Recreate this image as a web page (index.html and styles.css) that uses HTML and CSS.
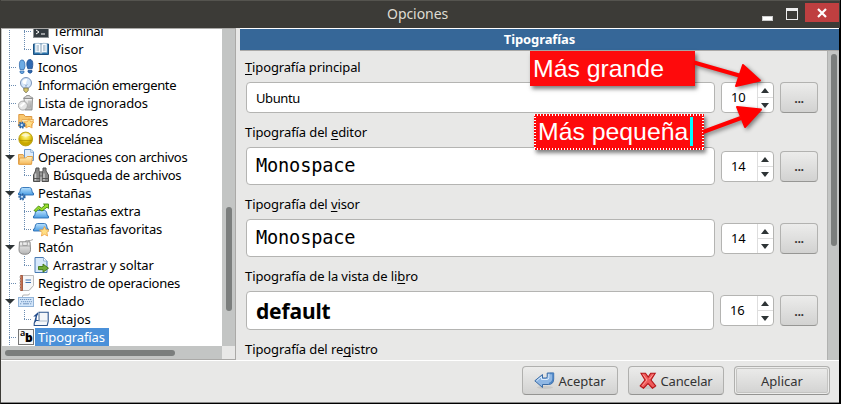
FILE: index.html
```
<!DOCTYPE html>
<html lang="es">
<head>
<meta charset="utf-8">
<title>Opciones</title>
<link rel="stylesheet" href="styles.css">
</head>
<body>
<svg class="defs" width="0" height="0">
  <defs>
    <linearGradient id="blue" x2="0" y2="1"><stop stop-color="#b9e2ff"/><stop offset="1" stop-color="#4a9ce2"/></linearGradient>
    <linearGradient id="gray" x2="0" y2="1"><stop stop-color="#f6f6f6"/><stop offset="1" stop-color="#b4b4b4"/></linearGradient>
    <radialGradient id="gold" cx=".5" cy=".3"><stop stop-color="#fff9a0"/><stop offset=".6" stop-color="#ecd42c"/><stop offset="1" stop-color="#c9a800"/></radialGradient>
    <linearGradient id="folder" x2="0" y2="1"><stop stop-color="#fff0bd"/><stop offset="1" stop-color="#f5b85a"/></linearGradient>
    <path id="tab" d="M4.500 2.500h7q1.500 0 2 1.500l1 4h1v2H.5v-2h1l1-4q.5-1.500 2-1.500z" fill="url(#blue)" stroke="#2a6eb4" stroke-width=".9"/>
    <path id="star" d="M0-5l1.500 3.200 3.500.400-2.600 2.400.700 3.500L0 2.800l-3.100 1.700.700-3.500L-5-1.400l3.500-.400z" fill="#ffdf85" stroke="#eda040" stroke-width=".8"/>
    <g id="gear" fill="#4b86c6" stroke="#29609e" stroke-width=".8"><circle r="2.600" stroke-width="2" stroke-dasharray="1.300 1.100"/><circle r="1" fill="#d8ebfc" stroke="none"/></g>
  </defs>
</svg>
<div class="window">
  <header class="titlebar">
    <h1>Opciones</h1>
    <div class="controls">
      <i class="minimize"></i><i class="maximize"></i>
      <span class="close"><svg width="10" height="10" viewBox="0 0 10 10"><path d="M1 1l8 8M9 1L1 9" stroke="#fff" stroke-width="2.200"/></svg></span>
    </div>
  </header>

  <main>
    <aside>
      <div class="tree">
        <div class="row"><i class="g root"></i><i class="g sub mid"></i>
          <svg class="icon" viewBox="0 0 16 16"><rect x=".5" y=".5" width="15" height="14" fill="#333b40" stroke="#8d9295"/><path d="M3 7l3 2-3 2M8 11h4" stroke="#fff" fill="none"/></svg>
          <span class="label t4">Terminal</span></div>
        <div class="row"><i class="g root"></i><i class="g sub"></i>
          <svg class="icon" viewBox="0 0 16 16"><path d="M.5 3v10.500h15V3z" fill="#2d76ad" stroke="#1d5081"/><path d="M2 2.500q4-1 6 1 2-2 6-1v9q-4-1-6 1-2-2-6-1z" fill="#f7fbff" stroke="#92b6cf" stroke-width=".6"/><path d="M8 3.500v9M3.500 5H6M3.500 7H6M3.500 9H6M10 5h2.500M10 7h2.500M10 9h2.500" stroke="#87a1b7"/></svg>
          <span class="label">Visor</span></div>
        <div class="row"><i class="g root tee"></i>
          <svg class="icon" viewBox="0 0 16 16"><path d="M3.200 1Q6 .2 6.800 4T6 10.500H2Q.3 2.500 3.200 1z" fill="#6dabe4" stroke="#376fae" stroke-width=".8"/><path d="M2 12h4v1.500q-2 2.500-4 0z" fill="#6dabe4" stroke="#376fae" stroke-width=".8"/><path d="M13 .6Q9.800-.2 9 3t.9 6.800h4.200Q16 2.500 13 .6z" fill="#2f69b1" stroke="#1d4e90" stroke-width=".8"/><path d="M10 11.500H14V13q-1.800 2.500-4 0z" fill="#2f69b1" stroke="#1d4e90" stroke-width=".8"/></svg>
          <span class="label t2">Iconos</span></div>
        <div class="row"><i class="g root tee"></i>
          <svg class="icon" viewBox="0 0 16 16"><circle cx="8" cy="6" r="5.500" fill="#d4e6fb" stroke="#7b94b9"/><path d="M4.200 5q1.200-3.500 5-3l-2 7z" fill="#fff"/><path d="M6.500 7.500l1.500 1 1.500-1M8 8v3" fill="none" stroke="#8da6ca" stroke-width=".8"/><path d="M5.800 11h4.400v2.500L8.500 15.500h-1L5.800 13.500z" fill="#d6c66a" stroke="#746d4e" stroke-width=".8"/></svg>
          <span class="label t4">Información emergente</span></div>
        <div class="row"><i class="g root tee"></i>
          <svg class="icon" viewBox="0 0 16 16"><path d="M6 3.500h8.500l-.5 11.500H7z" fill="url(#gray)" stroke="#8a8a8a" stroke-width=".9"/><path d="M5.500 3.500q0-1.500 2-1.500l1-1.500h3l1 1.500q2.500 0 2.500 1.500z" fill="#d2d2d2" stroke="#858585" stroke-width=".8"/><path d="M11 5.500V13M13 5.500l-.3 7" stroke="#999" stroke-width=".8"/><circle cx="4.900" cy="10.600" r="4.500" fill="#e6e6e6" stroke="#999" stroke-width=".8"/><path d="M2.500 11.500l4-3.500" stroke="#fff" stroke-width="2"/></svg>
          <span class="label t1">Lista de ignorados</span></div>
        <div class="row"><i class="g root tee"></i>
          <svg class="icon" viewBox="0 0 16 16"><path d="M.8 13.500v-12h5l1.500 2h6.500v10z" fill="#f9c76e" stroke="#dc9740"/><path d="M2 13.500l2-7h11.500l-2 7z" fill="url(#folder)" stroke="#e3a246" stroke-width=".8"/><use href="#gear" x="3.800" y="12"/><use href="#star" x="11" y="10.500"/></svg>
          <span class="label t2">Marcadores</span></div>
        <div class="row"><i class="g root tee"></i>
          <svg class="icon" viewBox="0 0 16 16"><circle cx="7.700" cy="8" r="6.900" fill="url(#gold)" stroke="#b9a017" stroke-width=".9"/><path d="M3 4.500q4.700-5 9.400 0-4.700 1.800-9.400 0z" fill="#fff" opacity=".6"/><path d="M1.500 9.500h12.500" stroke="#a98e00" opacity=".7"/></svg>
          <span class="label t4">Miscelánea</span></div>
        <div class="row"><i class="g root open"></i>
          <svg class="icon" viewBox="0 0 16 16"><path d="M.5 15V5.500h4.500l1 1.500h7v8z" fill="#f5c67b" stroke="#e0a04c"/><path d="M6.500.5h6.500l2.500 2.500v8.500h-9z" fill="#deecfb" stroke="#6999cf"/><path d="M12.800.8v2.500h2.400" fill="#fff" stroke="#6999cf" stroke-width=".7"/><path d="M.8 15.300L1.700 9h6l1.500-1.500h5.300l-1 7.800z" fill="url(#folder)" stroke="#e3a246"/></svg>
          <span class="label t3">Operaciones con archivos</span></div>
        <div class="row"><i class="g root"></i><i class="g sub"></i>
          <svg class="icon" viewBox="0 0 16 16"><path d="M3 1h3v2.500l1 1v10H.5V8L2.500 4zM10 1h3v3l2.500 4v6.500H9v-10l1-1z" fill="#888" stroke="#4e4e4e"/><path d="M6.500 5h3v4h-3z" fill="#999" stroke="#555" stroke-width=".7"/><path d="M2.500 6.500v7M11 6.500v7" stroke="#ccc" stroke-width="1.500"/><path d="M.5 11.500H7M9 11.500h6.500" stroke="#555"/></svg>
          <span class="label t3">Búsqueda de archivos</span></div>
        <div class="row"><i class="g root open"></i>
          <svg class="icon" viewBox="0 0 16 16"><use href="#tab"/><use href="#gear" x="4" y="11.800"/></svg>
          <span class="label t2">Pestañas</span></div>
        <div class="row"><i class="g root"></i><i class="g sub mid"></i>
          <svg class="icon" viewBox="0 0 16 16"><use href="#tab" y="5"/><path d="M1 7.500L5.500 3l3 2L12 2.200 10.500 1H15.500V5.500L14 4.200 9 8 5.700 6 3 8.500z" fill="#9be02e" stroke="#43870d" stroke-width=".9"/></svg>
          <span class="label t1">Pestañas extra</span></div>
        <div class="row"><i class="g root"></i><i class="g sub"></i>
          <svg class="icon" viewBox="0 0 16 16"><use href="#tab"/><use href="#star" x="11.500" y="10.500"/></svg>
          <span class="label t1">Pestañas favoritas</span></div>
        <div class="row"><i class="g root open"></i>
          <svg class="icon" viewBox="0 0 16 16"><path d="M7.500 4q-1-3 2-2.500t5.500-1" fill="none" stroke="#aaa"/><path d="M1.500 2.800h10.500l.5 8q0 4.500-5.700 4.500T1 10.800z" fill="url(#gray)" stroke="#888"/><path d="M4.700 3v3.500h4.600V3M1.300 7h11" fill="none" stroke="#989898" stroke-width=".8"/></svg>
          <span class="label t1">Ratón</span></div>
        <div class="row"><i class="g root"></i><i class="g sub"></i>
          <svg class="icon" viewBox="0 0 16 16"><path d="M2 .5h8.500L14 4v11.500H2z" fill="#d8e9fb" stroke="#4a7bb3"/><path d="M10.500.5V4H14" fill="#fff" stroke="#82a7d2" stroke-width=".8"/><path d="M5.500 9.500H10V7l5.500 4.200L10 15.200v-2.500H5.500z" fill="#71ad39" stroke="#3e7415" stroke-width=".9"/></svg>
          <span class="label t1">Arrastrar y soltar</span></div>
        <div class="row"><i class="g root tee"></i>
          <svg class="icon" viewBox="0 0 16 16"><path d="M3.500.5h12v10l-4.500 5H3.500z" fill="#f6f7f8" stroke="#bbb"/><path d="M2.500.5h2v15h-2z" fill="#c5704f" stroke="#99492f" stroke-width=".8"/><path d="M1 2h2M1 5h2M1 8h2M1 11h2M1 14h2" stroke="#bbb"/><path d="M7.500 5h5.500M7.500 7.500h5.500" stroke="#3f73b2" stroke-width="1.200"/><path d="M11 15.500l4.500-5" stroke="#bbb" stroke-width=".7"/></svg>
          <span class="label t2">Registro de operaciones</span></div>
        <div class="row"><i class="g root open"></i>
          <svg class="icon" viewBox="0 0 16 16"><path d="M4.500 4.500V3q0-1 1.500-1H10q1.500 0 1.500-1.500" fill="none" stroke="#b0b0b0"/><rect x=".5" y="4.500" width="15" height="9" fill="#d3e6fa" stroke="#93b4d8"/><path d="M2 6.500h12M3 8.700h11M2 10.800h2M12 10.800h2" stroke="#7396c0" stroke-dasharray="1.300 .7"/><path d="M5 10.800h6" stroke="#7396c0"/></svg>
          <span class="label">Teclado</span></div>
        <div class="row"><i class="g root"></i><i class="g sub"></i>
          <svg class="icon" viewBox="0 0 16 16"><path d="M6 1.200h9.200v9.300l-1 4H1.200V12l1-2.500h4z" fill="#f4f6f9" stroke="#2c548d" stroke-width="1.100"/><path d="M5.500 10h9M6.200 2v7.500" stroke="#aebdcd"/><path d="M.2 5.500L5 1.200v2.200Q3.700 4.500 3.500 9.500L1.700 12q-.5-4 1-6.500z" fill="#224d8d"/></svg>
          <span class="label">Atajos</span></div>
        <div class="row"><i class="g root tee"></i>
          <span class="icon ab"><b class="a">a</b><b class="b">b</b></span>
          <span class="label selected t1">Tipografías</span></div>
      </div>
      <div class="vbar"><i></i></div>
      <div class="hbar"><i></i></div>
      <div class="corner"></div>
    </aside>

    <section>
      <h2>Tipografías</h2>
      <div class="pane">
        <div class="form">
          <label class="l1"><u>T</u>ipografía principal</label>
          <div class="line h31"><div class="field ubuntu">Ubuntu</div>
            <div class="spin"><span>10</span><i></i></div><button class="dots">...</button></div>
          <label>Tipografía del <u>e</u>ditor</label>
          <div class="line h38"><div class="field mono">Monospace</div>
            <div class="spin"><span>14</span><i></i></div><button class="dots">...</button></div>
          <label>Tipografía del <u>v</u>isor</label>
          <div class="line h38"><div class="field mono">Monospace</div>
            <div class="spin"><span>14</span><i></i></div><button class="dots">...</button></div>
          <label>Tipografía de la vista de li<u>b</u>ro</label>
          <div class="line h39"><div class="field bold">default</div>
            <div class="spin wide"><span>16</span><i></i></div><button class="dots">...</button></div>
          <label>Tipografía del re<u>g</u>istro</label>
        </div>
        <div class="scroll"><i></i></div>
      </div>
    </section>
  </main>

  <footer>
    <button class="action"><svg width="21" height="18" viewBox="0 0 21 18"><ellipse cx="11" cy="15.500" rx="8" ry="1.500" fill="#c8c8c6"/><path d="M.8 8.800L8.500 2.500v3.500h3.500q1.200 0 1.200-1.500V1h6.500v6q0 5.500-5.500 5.500H8.500v3z" fill="#8fb7e4" stroke="#3a6ba5"/><path d="M2.500 8.800L7.500 4.700v2.800H13q1.800 0 1.800-2V2" fill="none" stroke="#dcebfb"/><path d="M16 1.500h3v5q0 4-4 5.200" fill="none" stroke="#4b83c2" stroke-width="1.500"/></svg><span>Aceptar</span></button>
    <button class="action"><svg width="18" height="18" viewBox="0 0 18 18"><ellipse cx="9" cy="15.500" rx="8" ry="1.500" fill="#c8c8c6"/><path d="M2 1.200h4.500L9.200 5l2.500-3.800h4.500L12 8l4.700 6-3.200 2.200L9 11.500 4.500 16.200 1.200 14l4.800-6z" fill="#ee5a5a" stroke="#b51518" stroke-width="1.100"/><path d="M4 2.500L8 8l-4.500 5.500M14 2.500L10.500 7" fill="none" stroke="#ff9a95"/></svg><span class="t1">Cancelar</span></button>
    <button class="action focus"><span>Aplicar</span></button>
  </footer>

  <div class="note big">Más grande</div>
  <div class="note small">Más pequeña<i></i></div>
  <svg class="arrows" width="80" height="90" viewBox="690 50 80 90">
    <g fill="#f00" stroke="#f00" stroke-linejoin="round">
      <path d="M694 62.500L741 76M703 132L741 118" stroke-width="4"/>
      <path d="M760 80.500L743 65 736 86zM761 109.500L737 107 745 127z" stroke-width="2"/>
    </g>
  </svg>
</div>
</body>
</html>
```

FILE: styles.css
```
* { box-sizing: border-box; }
body { margin: 0; overflow: hidden; font: 13px/18px "Noto Sans", sans-serif; color: #000; }
h1, h2 { margin: 0; }
i { display: block; font-style: normal; }
.defs { position: absolute; }
.window { position: relative; display: flex; flex-direction: column; width: 841px; height: 404px; border-left: 1px solid #3c3b37; border-right: 2px solid #000; border-bottom: 1px solid #000; background: #e8e8e7; }

.titlebar { position: relative; flex: none; height: 28px; border-top: 1px solid #55544f; background: #3c3b37; margin-right: -1px; }
h1 { padding-left: 386px; font-size: 14px; font-weight: 400; line-height: 26px; color: #dfdbd2; letter-spacing: -.05px; }
.controls { position: absolute; right: 1px; top: 2px; display: flex; gap: 13px; }
.minimize { width: 11px; height: 5px; margin-top: 13px; background: #fff; border: 1px solid #ccc; }
.maximize { width: 12px; height: 12px; margin-top: 5px; border: 1px solid #eee; border-top-width: 3px; }
.close { display: flex; align-items: center; justify-content: center; width: 34px; height: 19px; margin-left: -6px; background: #bf3f40; }

main { display: flex; flex: none; height: 332px; }
aside { display: grid; grid-template: 317px 13px / 220px 13px; width: 235px; height: 332px; border: 1px solid #aaa9a7; border-left-color: #c2c2c0; }
.tree { background: #fff; overflow: hidden; }
.row { display: flex; height: 18px; }
.row:first-child { margin-top: -7px; }
.g { position: relative; flex: none; width: 16px; }
.root { background: repeating-linear-gradient(#6c8db2 0 1px, transparent 1px 2px) 7px 0 / 1px 18px no-repeat; }
.sub { width: 15px; background: repeating-linear-gradient(#6c8db2 0 1px, transparent 1px 2px) 6px 0 / 1px 9px no-repeat, repeating-linear-gradient(90deg, #6c8db2 0 1px, transparent 1px 2px) 6px 9px / 7px 1px no-repeat; }
.sub.mid { background-size: 1px 18px, 7px 1px; }
.tee { background: repeating-linear-gradient(#6c8db2 0 1px, transparent 1px 2px) 7px 0 / 1px 18px no-repeat, repeating-linear-gradient(90deg, #6c8db2 0 1px, transparent 1px 2px) 7px 9px / 7px 1px no-repeat; }
.open::before { content: ""; position: absolute; left: 3px; top: 7px; border: solid transparent; border-width: 5px 5px 0; border-top-color: #2e3436; }
.icon { flex: none; width: 16px; height: 16px; margin-top: 1px; }
.label { display: block; margin-left: 1px; padding: 0 4px 0 3px; white-space: nowrap; }
.t1 { letter-spacing: -.13px; }
.t2 { letter-spacing: -.23px; }
.t3 { letter-spacing: -.3px; }
.t4 { letter-spacing: -.37px; }
.selected { background: #4a90d9; color: #fff; }
.ab { position: relative; border: 1px solid #777; background: #f7f7f7; font: 700 12px/14px "Noto Sans", sans-serif; }
.ab .a { position: absolute; left: 1px; top: -4px; font-size: 9px; font-weight: 600; }
.ab .b { position: absolute; left: 6px; top: 1px; }
.vbar, .hbar { background: #c3c5c4; }
.vbar { padding: 178px 3px 0 4px; }
.vbar i { height: 104px; border-radius: 3px; background: #7b7e7d; }
.hbar { padding: 4px 0 0 3px; }
.hbar i { width: 170px; height: 6px; border-radius: 3px; background: #7b7e7d; }

section { flex: 1; display: flex; flex-direction: column; margin-left: 3px; }
h2 { height: 23px; margin-left: 1px; border-top: 1px solid #fff; border-bottom: 1px solid #aaa9a7; background: #366798; color: #fff; text-align: center; font-size: 13px; line-height: 21px; letter-spacing: -.1px; }
.pane { display: flex; height: 309px; overflow: hidden; }
.form { width: 588px; padding-left: 6px; }
.form label { display: block; height: 18px; margin: 10px 0 6px; white-space: nowrap; letter-spacing: -.1px; }
.form .l1 { margin-top: 7px; letter-spacing: -.14px; }
u { text-underline-offset: 2px; text-decoration-thickness: 1px; text-decoration-skip-ink: none; }
.line { display: flex; align-items: center; gap: 6px; width: 572px; margin-left: 1px; }
.h31 { height: 31px; }
.h38 { height: 38px; }
.h39 { height: 39px; }
.field { flex: 1; display: flex; align-items: center; height: 100%; padding-left: 9px; border: 1px solid #b4b4b2; border-radius: 4px; background: #fff; }
.ubuntu { letter-spacing: -.4px; }
.mono { font: 18.670px/24px "DejaVu Sans Mono", monospace; letter-spacing: -.2px; }
.bold { font-size: 21px; font-weight: 700; letter-spacing: -.15px; }
.spin { display: flex; width: 53px; height: 31px; border: 1px solid #b4b4b2; border-radius: 4px; background: #fff; line-height: 29px; }
.spin.wide { width: 54px; }
.spin span { flex: 1; padding-left: 9px; letter-spacing: -.3px; }
.spin i { position: relative; width: 16px; border-left: 1px solid #dedede; background: linear-gradient(#dedede, #dedede) 0 14px / 100% 1px no-repeat; }
.spin i::before, .spin i::after { content: ""; position: absolute; left: 3px; border: solid transparent; border-width: 0 4.500px 5px; border-bottom-color: #2e3436; top: 5px; }
.spin i::after { top: 20px; transform: scaleY(-1); }
button { font: inherit; color: #333; padding: 0; border: 1px solid #aaa; border-radius: 4px; background: linear-gradient(#ececeb, #d2d2d1); }
.dots { width: 38px; height: 31px; border-color: #b2b2b0 #b2b2b0 #969694; font-weight: 600; letter-spacing: -.5px; }
.scroll { flex: 1; padding: 3px 2px 0 3px; border-left: 1px solid #b0b1b0; background: #c3c5c4; }
.scroll i { width: 6px; height: 192px; border-radius: 3px; background: #7b7e7d; }

footer { flex: 1; display: flex; justify-content: flex-end; gap: 10px; padding: 5px 9px 0 0; border-top: 1px solid #fff; border-bottom: 1px solid #888; }
.action { display: flex; align-items: center; justify-content: center; gap: 3px; width: 96px; height: 29px; border-color: #b0b0ae #b0b0ae #949492; white-space: nowrap; }
.focus { box-shadow: inset 0 0 0 1px #ededec, inset 0 0 0 2px #c4c4c2; }

.note { position: absolute; background: #fe0a0c; color: #fff; font: 24.800px/36px "Liberation Sans", sans-serif; white-space: nowrap; box-shadow: 2px 3px 4px rgba(0, 0, 0, .5); }
.big { left: 529px; top: 51px; width: 165px; height: 35px; padding-left: 3px; }
.small {
  --h: repeating-linear-gradient(90deg, #fff 0 1px, #fe0a0c 1px 3px);
  --v: repeating-linear-gradient(#fff 0 1px, #fe0a0c 1px 3px);
  left: 533px; top: 114px; width: 170px; height: 36px; padding-left: 4px;
  background: var(--h) 0 0 / 100% 2px no-repeat, var(--h) 0 100% / 100% 2px no-repeat, var(--v) 0 0 / 2px 100% no-repeat, var(--v) 100% 0 / 2px 100% no-repeat, #fe0a0c;
}
.small i { position: absolute; left: 156px; top: 3px; width: 3px; height: 29px; background: #0ff; }
.arrows { position: absolute; left: 689px; top: 50px; filter: drop-shadow(2px 2px 2px rgba(0, 0, 0, .45)); }
```
